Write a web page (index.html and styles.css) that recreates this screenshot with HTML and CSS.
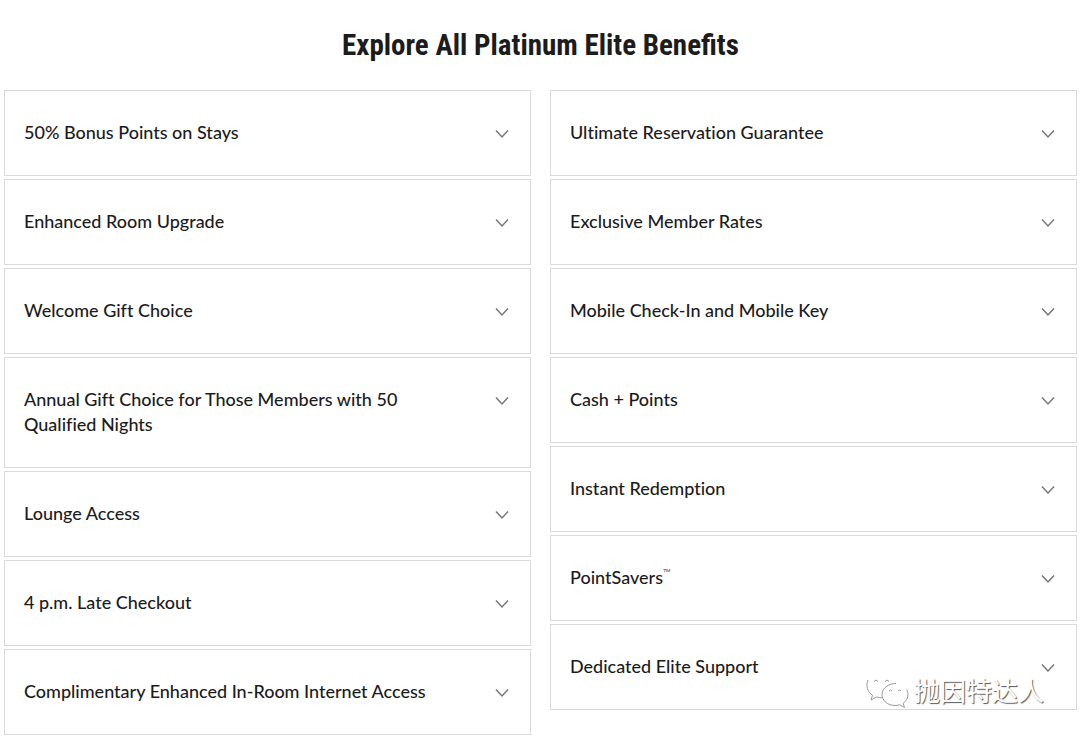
FILE: index.html
```html
<!DOCTYPE html>
<html lang="en">
<head>
<meta charset="utf-8">
<meta name="viewport" content="width=device-width, initial-scale=1">
<title>Explore All Platinum Elite Benefits</title>
<link rel="stylesheet" href="styles.css">
</head>
<body>
<svg class="defs" aria-hidden="true">
  <symbol id="chevron" viewBox="0 0 14 10"><path d="M1 1.500 7 8l6-6.500"/></symbol>
</svg>
<main class="page">
  <h1 class="title">Explore All Platinum Elite Benefits</h1>
  <div class="columns">
    <div class="column">
      <button class="item" type="button" aria-expanded="false"><span class="label">50% Bonus Points on Stays</span><svg class="chevron"><use href="#chevron"/></svg></button>
      <button class="item" type="button" aria-expanded="false"><span class="label">Enhanced Room Upgrade</span><svg class="chevron"><use href="#chevron"/></svg></button>
      <button class="item" type="button" aria-expanded="false"><span class="label">Welcome Gift Choice</span><svg class="chevron"><use href="#chevron"/></svg></button>
      <button class="item" type="button" aria-expanded="false"><span class="label">Annual Gift Choice for Those Members with 50 Qualified Nights</span><svg class="chevron"><use href="#chevron"/></svg></button>
      <button class="item" type="button" aria-expanded="false"><span class="label">Lounge Access</span><svg class="chevron"><use href="#chevron"/></svg></button>
      <button class="item" type="button" aria-expanded="false"><span class="label">4 p.m. Late Checkout</span><svg class="chevron"><use href="#chevron"/></svg></button>
      <button class="item" type="button" aria-expanded="false"><span class="label">Complimentary Enhanced In-Room Internet Access</span><svg class="chevron"><use href="#chevron"/></svg></button>
    </div>
    <div class="column">
      <button class="item" type="button" aria-expanded="false"><span class="label">Ultimate Reservation Guarantee</span><svg class="chevron"><use href="#chevron"/></svg></button>
      <button class="item" type="button" aria-expanded="false"><span class="label">Exclusive Member Rates</span><svg class="chevron"><use href="#chevron"/></svg></button>
      <button class="item" type="button" aria-expanded="false"><span class="label">Mobile Check-In and Mobile Key</span><svg class="chevron"><use href="#chevron"/></svg></button>
      <button class="item" type="button" aria-expanded="false"><span class="label">Cash + Points</span><svg class="chevron"><use href="#chevron"/></svg></button>
      <button class="item" type="button" aria-expanded="false"><span class="label">Instant Redemption</span><svg class="chevron"><use href="#chevron"/></svg></button>
      <button class="item" type="button" aria-expanded="false"><span class="label">PointSavers<sup class="mark">™</sup></span><svg class="chevron"><use href="#chevron"/></svg></button>
      <button class="item" type="button" aria-expanded="false"><span class="label">Dedicated Elite Support</span><svg class="chevron"><use href="#chevron"/></svg></button>
      <div class="watermark" lang="zh-CN">
        <svg class="wechat" viewBox="0 0 44 38" aria-hidden="true">
          <path class="bubble" d="M17 2C8.500 2 2 7.500 2 14.500c0 4 2 7.500 5.500 9.800L6 29l5.500-3c1.800.6 3.500.8 5.500.8C25.500 26.800 32 21.500 32 14.500S25.500 2 17 2Z"/>
          <path class="rim" d="M3 9c-2.500 6-.5 12 4.500 15.300L6 29l5.500-3c2 .6 4 .8 6 .8"/>
          <path class="bubble" d="M30 12.500c-7.500 0-13 5-13 11s5.500 11 13 11c1.800 0 3.300-.2 4.700-.7l4.800 2.700-1.300-4.200c3-2.200 4.800-5.200 4.800-8.800 0-6-5.500-11-13-11Z"/>
          <path class="rim" d="M31 12.500c-8 0-14 5-14 11s5.500 11 13 11c1.800 0 3.300-.2 4.700-.7l4.800 2.700-1.300-4.200c3-2.200 4.800-5.200 4.800-8.800 0-2-.5-3.500-1.500-5"/>
          <path class="eye" d="M9 10.500q2-3 4 0M20 10.500q2-3 4 0M24 20q1.500-2 3 0M33 20q1.500-2 3 0"/>
        </svg>
        <span>抛因特达人</span>
      </div>
    </div>
  </div>
</main>
</body>
</html>
```
FILE: styles.css
```css
* {
  box-sizing: border-box;
}

body {
  margin: 0;
  background: #fff;
  color: #1c1c1c;
  font-family: Lato, "Noto Sans CJK SC", sans-serif;
}

.defs {
  position: absolute;
  width: 0;
  height: 0;
}

.page {
  padding: 25px 3px 3px 4px;
}

.title {
  margin: 0 0 25px;
  font: bold 29px/40px "Liberation Sans Narrow", "Roboto Condensed", sans-serif;
  text-align: center;
}

.columns {
  display: grid;
  grid-template-columns: 1fr 1fr;
  align-items: start;
  gap: 19px;
}

.column {
  position: relative;
  display: flex;
  flex-direction: column;
  gap: 3px;
}

.item {
  display: flex;
  align-items: flex-start;
  justify-content: space-between;
  gap: 64px;
  padding: 29px 21px 30px 19px;
  border: 1px solid #dadada;
  border-radius: 0;
  background: #fff;
  color: inherit;
  font: 500 18px/25px Lato, sans-serif;
  font-variant-ligatures: none;
  text-align: left;
  cursor: pointer;
}

.mark {
  font-size: 11px;
  line-height: 0;
  color: #777;
}

.chevron {
  flex: none;
  width: 14px;
  height: 10px;
  margin-top: 9px;
  fill: none;
  stroke: #777;
  stroke-width: 1.5;
}

.watermark {
  position: absolute;
  right: 33px;
  bottom: 1px;
  display: flex;
  align-items: center;
  gap: 5px;
  color: #fff;
  font: 26px/38px "Noto Sans CJK SC", sans-serif;
  text-shadow: 1px 1px 1px #555;
  pointer-events: none;
}

.wechat {
  width: 44px;
  height: 38px;
}

.bubble {
  fill: #fff;
}

.rim,
.eye {
  fill: none;
  stroke: #999;
}
```
